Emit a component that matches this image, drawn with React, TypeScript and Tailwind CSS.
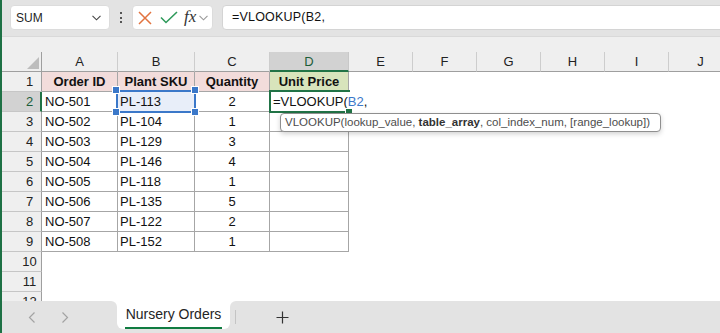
import React from 'react'

const COLS = [
  { key: 'A', w: 'w-[76px]' },
  { key: 'B', w: 'w-[77px]' },
  { key: 'C', w: 'w-[75px]' },
  { key: 'D', w: 'w-[79px]' },
  { key: 'E', w: 'w-[64px]' },
  { key: 'F', w: 'w-[64px]' },
  { key: 'G', w: 'w-[64px]' },
  { key: 'H', w: 'w-[64px]' },
  { key: 'I', w: 'w-[64px]' },
  { key: 'J', w: 'w-[64px]' },
]

const ORDERS = [
  ['NO-501', 'PL-113', '2'],
  ['NO-502', 'PL-104', '1'],
  ['NO-503', 'PL-129', '3'],
  ['NO-504', 'PL-146', '4'],
  ['NO-505', 'PL-118', '1'],
  ['NO-506', 'PL-135', '5'],
  ['NO-507', 'PL-122', '2'],
  ['NO-508', 'PL-152', '1'],
]

const HEADERS = ['Order ID', 'Plant SKU', 'Quantity', 'Unit Price']

function Chevron({ className }: { className?: string }) {
  return (
    <svg width="9" height="6" viewBox="0 0 9 6" className={className}>
      <polyline points="0.5,0.8 4.5,4.8 8.5,0.8" fill="none" stroke="currentColor" strokeWidth="1.1" />
    </svg>
  )
}

function Toolbar() {
  return (
    <div className="h-[37px] shrink-0 bg-[#e3e3e3] border-b border-[#d9d9d9] flex items-start pt-[5px]">
      <div className="ml-[8px] w-[100px] h-[25px] rounded-[4px] bg-white border border-[#dcdcdc] flex items-center pl-[5px] pr-[8px]">
        <span className="flex-1 text-[12px] text-[#1f1f1f]">SUM</span>
        <Chevron className="text-[#444]" />
      </div>
      <div className="w-[22px] h-[25px] flex flex-col items-center justify-center gap-[2.5px]">
        <span className="w-[2px] h-[2px] bg-[#555]" />
        <span className="w-[2px] h-[2px] bg-[#555]" />
        <span className="w-[2px] h-[2px] bg-[#555]" />
      </div>
      <div className="w-[81px] h-[25px] rounded-[4px] bg-white border border-[#dcdcdc] flex items-center pl-[5px]">
        <svg width="14" height="14" viewBox="0 0 14 14">
          <path d="M1 1 L13 13 M13 1 L1 13" stroke="#e2733f" strokeWidth="1.5" fill="none" />
        </svg>
        <svg width="18" height="13" viewBox="0 0 18 13" className="ml-[8px]">
          <polyline points="1,6.5 6,11.5 17,1" stroke="#2f9a5b" strokeWidth="1.6" fill="none" />
        </svg>
        <span className="ml-[6px] text-[17px] leading-none italic text-[#333] font-['Liberation_Serif',serif] -mt-[2px]">
          fx
        </span>
        <Chevron className="ml-[3px] text-[#999]" />
      </div>
      <div className="ml-[9px] flex-1 -mr-[4px] h-[25px] bg-white border border-[#d4d4d4] rounded-l-[4px] flex items-center pl-[9px]">
        <span className="text-[12.5px] text-[#111] tracking-[0.2px]">=VLOOKUP(B2,</span>
      </div>
    </div>
  )
}

function HeaderRow() {
  return (
    <div className="flex h-[20px] bg-[#efefef]">
      <div className="w-[40px] shrink-0 border-r border-b border-[#9f9f9f] relative">
        <svg width="12" height="12" viewBox="0 0 12 12" className="absolute right-[2px] bottom-[2px]">
          <polygon points="12,0 12,12 0,12" fill="#bdbdbd" />
        </svg>
      </div>
      {COLS.map(c =>
        c.key === 'D' ? (
          <div
            key={c.key}
            className={`${c.w} shrink-0 bg-[#d2d2d2] border-r border-r-[#c8c8c8] border-b-2 border-b-[#217346] text-center text-[13px] leading-[19px] text-[#1d5e3a]`}
          >
            {c.key}
          </div>
        ) : (
          <div
            key={c.key}
            className={`${c.w} shrink-0 border-r border-r-[#cdcdcd] border-b border-b-[#9f9f9f] text-center text-[13px] leading-[19px] text-[#222]`}
          >
            {c.key}
          </div>
        )
      )}
    </div>
  )
}

function RowHeader({ n, active }: { n: number; active?: boolean }) {
  if (active) {
    return (
      <div className="w-[40px] shrink-0 bg-[#d2d2d2] border-b border-b-[#c6c6c6] border-r-2 border-r-[#217346] text-center pl-[17px] text-[13px] leading-[19px] text-[#1d5e3a]">
        {n}
      </div>
    )
  }
  return (
    <div className="w-[40px] shrink-0 bg-[#efefef] border-b border-b-[#c6c6c6] border-r border-r-[#9f9f9f] text-center pl-[16px] text-[13px] leading-[19px] text-[#222]">
      {n}
    </div>
  )
}

function Grid() {
  return (
    <div className="flex-1 min-h-0 relative overflow-hidden bg-white">
      <div className="h-[15px] bg-[#efefef]" />
      <HeaderRow />

      {/* row 1: table headings */}
      <div className="flex h-[20px]">
        <RowHeader n={1} />
        {HEADERS.map((h, i) => (
          <div
            key={h}
            className={`${COLS[i].w} shrink-0 border-r border-b border-[#a6a6a6] text-center font-bold text-[13px] leading-[19px] text-[#111] ${
              i === 3 ? 'bg-[#d8e4bc]' : 'bg-[#f2dcdb]'
            }`}
          >
            {h}
          </div>
        ))}
      </div>

      {ORDERS.map((r, idx) => {
        const rowNo = idx + 2
        return (
          <div key={r[0]} className="flex h-[20px]">
            <RowHeader n={rowNo} active={rowNo === 2} />
            <div className="w-[76px] shrink-0 border-r border-b border-[#a6a6a6] pl-[3px] text-[13px] leading-[19px] text-[#111]">
              {r[0]}
            </div>
            <div
              className={`w-[77px] shrink-0 border-r border-b border-[#a6a6a6] pl-[2px] text-[13px] leading-[19px] text-[#111] ${
                rowNo === 2 ? 'bg-[#e8eef9]' : ''
              }`}
            >
              {r[1]}
            </div>
            <div className="w-[75px] shrink-0 border-r border-b border-[#a6a6a6] text-center text-[13px] leading-[19px] text-[#111]">
              {r[2]}
            </div>
            <div className="w-[79px] shrink-0 border-r border-b border-[#a6a6a6] text-[13px] leading-[19px] text-[#111]" />
          </div>
        )
      })}

      {[10, 11, 12].map(n => (
        <div key={n} className="flex h-[20px]">
          <RowHeader n={n} />
        </div>
      ))}

      {/* B2 reference range */}
      <div className="absolute left-[114px] top-[53px] w-[80px] h-[23px] border-2 border-[#3b78c9]" />
      <div className="absolute left-[111px] top-[50px] w-[6px] h-[6px] bg-[#3b78c9] outline outline-1 outline-white" />
      <div className="absolute left-[190px] top-[50px] w-[6px] h-[6px] bg-[#3b78c9] outline outline-1 outline-white" />
      <div className="absolute left-[111px] top-[72px] w-[6px] h-[6px] bg-[#3b78c9] outline outline-1 outline-white" />
      <div className="absolute left-[190px] top-[72px] w-[6px] h-[6px] bg-[#3b78c9] outline outline-1 outline-white" />

      {/* active cell D2 in edit mode: text runs past the cell */}
      <div className="absolute left-[267px] top-[53px] w-[81px] h-[23px] border-2 border-r-0 border-[#217346]" />
      <div className="absolute left-[269px] top-[55px] h-[19px] bg-white pl-[2px] pr-[2px] text-[13px] leading-[19px] text-[#111] whitespace-nowrap">
        =VLOOKUP(<span className="text-[#3b78c9]">B2</span>,
      </div>
      <div className="absolute left-[344px] top-[72px] w-[6px] h-[6px] bg-[#217346] outline outline-1 outline-white" />

      {/* function argument tooltip */}
      <div className="absolute left-[278px] top-[76px] w-[381px] h-[19px] rounded-[4px] bg-white border border-[#8f8f8f] shadow-[0_2px_5px_rgba(0,0,0,0.18)] px-[4px] text-[11.5px] leading-[17px] text-[#4d4d4d] whitespace-nowrap">
        VLOOKUP(lookup_value, <span className="font-bold text-[#333]">table_array</span>, col_index_num, [range_lookup])
      </div>
    </div>
  )
}

function SheetTabs() {
  return (
    <div className="h-[32px] shrink-0 flex bg-white">
      <div className="w-[115px] bg-[#e3e3e3] rounded-tr-[6px] flex items-center pt-[1px]">
        <svg width="8" height="11" viewBox="0 0 8 11" className="ml-[26px] text-[#a3a3a3]">
          <polyline points="6.5,0.5 1.5,5.5 6.5,10.5" fill="none" stroke="currentColor" strokeWidth="1.2" />
        </svg>
        <svg width="8" height="11" viewBox="0 0 8 11" className="ml-[25px] text-[#a3a3a3]">
          <polyline points="1.5,0.5 6.5,5.5 1.5,10.5" fill="none" stroke="currentColor" strokeWidth="1.2" />
        </svg>
      </div>
      <div className="w-[113px] bg-[#e3e3e3]">
        <div className="h-[28px] bg-white rounded-b-[6px] flex flex-col items-center">
          <span className="mt-[4px] text-[14px] leading-[18px] text-[#242424]">Nursery Orders</span>
          <span className="mt-[4px] w-[97px] h-[2px] bg-[#107c41]" />
        </div>
      </div>
      <div className="flex-1 bg-[#e3e3e3] rounded-tl-[6px] flex items-center">
        <span className="ml-[5px] w-px h-[14px] bg-[#c4c4c4]" />
        <svg width="13" height="13" viewBox="0 0 13 13" className="ml-[40px] mt-[1px]">
          <path d="M6.5 0.5 V12.5 M0.5 6.5 H12.5" stroke="#333" strokeWidth="1.2" fill="none" />
        </svg>
      </div>
    </div>
  )
}

export default function App() {
  return (
    <div className="w-[720px] h-[333px] overflow-hidden flex flex-col bg-white border-l-2 border-[#1e7145] font-['Liberation_Sans',Arial,sans-serif]">
      <Toolbar />
      <Grid />
      <SheetTabs />
    </div>
  )
}
